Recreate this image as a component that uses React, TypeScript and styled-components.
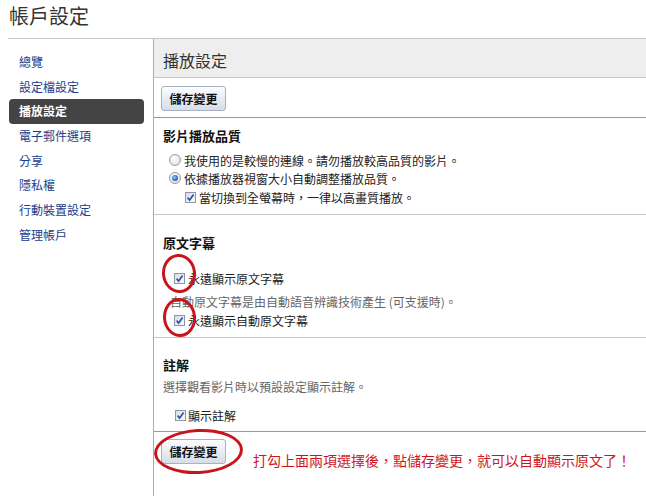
import React from "react";
import styled, { createGlobalStyle } from "styled-components";

const Global = createGlobalStyle`
  html, body { margin: 0; padding: 0; background: #fff; }
  body {
    font-family: "Noto Sans CJK TC", "Noto Sans", sans-serif;
    color: #222;
    width: 646px;
    height: 496px;
    overflow: hidden;
  }
`;

const Page = styled.div`
  padding-left: 8px;
`;

const Title = styled.h1`
  margin: 0;
  height: 38px;
  box-sizing: border-box;
  padding: 3px 0 0 1px;
  font-size: 20px;
  font-weight: 400;
  line-height: 26px;
  color: #333;
`;

const Main = styled.div`
  display: flex;
  border-top: 1px solid #c8c8c8;
  min-height: 460px;
`;

const Nav = styled.ul`
  list-style: none;
  margin: 0;
  padding: 11px 0 0 0;
  width: 145px;
  flex: none;
`;

const NavItem = styled.li<{ $active?: boolean }>`
  height: 24.7px;
  line-height: 24.7px;
  font-size: 12px;
  box-sizing: border-box;
  ${(p) =>
    p.$active
      ? `
    margin-left: 1px;
    width: 135px;
    padding-left: 10px;
    background: #444;
    color: #fff;
    font-weight: 700;
    border-radius: 4px;
  `
      : `
    padding-left: 11px;
    color: #1a3d8a;
  `}
`;

const Panel = styled.div`
  flex: 1;
  border-left: 1px solid #aaa;
`;

const PanelHeader = styled.div`
  height: 39px;
  box-sizing: border-box;
  padding: 3px 0 0 9px;
  display: flex;
  align-items: center;
  background: #eee;
  border-bottom: 1px solid #c8c8c8;
  font-size: 16px;
  color: #333;
`;

const ButtonBar = styled.div`
  height: 40px;
  box-sizing: border-box;
  padding: 7px 0 0 7px;
  border-bottom: 1px solid #999;
`;

const SaveButton = styled.button`
  position: relative;
  width: 65px;
  height: 25px;
  padding: 0;
  border: 1px solid #a6b2c4;
  border-radius: 3px;
  background: linear-gradient(#fbfcfd, #e9edf2 50%, #d6dee8);
  font-family: "Noto Sans CJK TC", sans-serif;
  font-size: 12px;
  font-weight: 700;
  color: #111;
  line-height: 23px;
`;

const Section = styled.div<{ $top: number; $bottom: number; $dark?: boolean }>`
  padding: ${(p) => p.$top}px 0 ${(p) => p.$bottom}px 9px;
  border-bottom: 1px solid ${(p) => (p.$dark ? "#999" : "#c8c8c8")};
`;

const Heading = styled.div`
  font-size: 13px;
  font-weight: 700;
  line-height: 18px;
  color: #111;
`;

const Row = styled.div<{ $indent: number; $gap?: number; $mt?: number }>`
  display: flex;
  align-items: center;
  height: 18px;
  padding-left: ${(p) => p.$indent}px;
  margin-top: ${(p) => p.$mt ?? 0}px;
  gap: ${(p) => p.$gap ?? 3}px;
  font-size: 12px;
  color: #222;
  white-space: nowrap;
`;

const Note = styled.div<{ $indent: number; $mt?: number }>`
  height: 18px;
  line-height: 18px;
  padding-left: ${(p) => p.$indent}px;
  margin-top: ${(p) => p.$mt ?? 0}px;
  font-size: 12px;
  color: #666;
  white-space: nowrap;
`;

const Radio = styled.span<{ $on?: boolean }>`
  position: relative;
  flex: none;
  width: 12px;
  height: 12px;
  box-sizing: border-box;
  border-radius: 50%;
  border: 1px solid #9a9a9a;
  background: radial-gradient(circle at 40% 35%, #fff, #dadada);
  &::after {
    content: "";
    display: ${(p) => (p.$on ? "block" : "none")};
    position: absolute;
    left: 2px;
    top: 2px;
    width: 6px;
    height: 6px;
    border-radius: 50%;
    background: radial-gradient(circle at 40% 40%, #9cc8f2, #2a68c0 60%, #153f86);
  }
`;

const Box = styled.span`
  position: relative;
  flex: none;
  width: 11px;
  height: 11px;
  box-sizing: border-box;
  border: 1px solid #8d96a6;
  background: linear-gradient(135deg, #d8dde5, #fafbfc);
  display: flex;
  align-items: center;
  justify-content: center;
`;

const Ring = styled.span<{ $l: number; $t: number; $w: number; $h: number; $r?: number }>`
  position: absolute;
  left: ${(p) => p.$l}px;
  top: ${(p) => p.$t}px;
  width: ${(p) => p.$w}px;
  height: ${(p) => p.$h}px;
  box-sizing: border-box;
  border: 3px solid #c8141c;
  border-radius: 50%;
  transform: rotate(${(p) => p.$r ?? 0}deg);
  pointer-events: none;
`;

const Footer = styled.div`
  display: flex;
  padding: 7px 0 0 7px;
`;

const Hint = styled.span`
  margin: 12px 0 0 27px;
  font-size: 14px;
  line-height: 18px;
  color: #d0141c;
  white-space: nowrap;
`;

const Check = ({ children }: { children?: React.ReactNode }) => (
  <Box>
    <svg width="9" height="9" viewBox="0 0 9 9">
      <path d="M1.6 4.6 L3.6 7 L7.6 1.4" fill="none" stroke="#2c56b4" strokeWidth="1.7" />
    </svg>
    {children}
  </Box>
);

const navItems = ["總覽", "設定檔設定", "播放設定", "電子郵件選項", "分享", "隱私權", "行動裝置設定", "管理帳戶"];

export default function App() {
  return (
    <Page>
      <Global />
      <Title>帳戶設定</Title>
      <Main>
        <Nav>
          {navItems.map((t) => (
            <NavItem key={t} $active={t === "播放設定"}>
              {t}
            </NavItem>
          ))}
        </Nav>
        <Panel>
          <PanelHeader>播放設定</PanelHeader>
          <ButtonBar>
            <SaveButton>儲存變更</SaveButton>
          </ButtonBar>

          <Section $top={9} $bottom={8}>
            <Heading>影片播放品質</Heading>
            <Row $indent={6} $mt={6}>
              <Radio />
              我使用的是較慢的連線。請勿播放較高品質的影片。
            </Row>
            <Row $indent={6}>
              <Radio $on />
              依據播放器視窗大小自動調整播放品質。
            </Row>
            <Row $indent={22} $mt={1}>
              <Check />
              當切換到全螢幕時，一律以高畫質播放。
            </Row>
          </Section>

          <Section $top={19} $bottom={8}>
            <Heading>原文字幕</Heading>
            <Row $indent={11} $mt={17}>
              <Check>
                <Ring $l={-13} $t={-20} $w={34} $h={39} $r={-5} />
              </Check>
              永遠顯示原文字幕
            </Row>
            <Note $indent={7} $mt={6}>
              自動原文字幕是由自動語音辨識技術產生 (可支援時)。
            </Note>
            <Row $indent={11}>
              <Check>
                <Ring $l={-12} $t={-18} $w={33} $h={39} $r={-5} />
              </Check>
              永遠顯示自動原文字幕
            </Row>
          </Section>

          <Section $top={18} $bottom={7} $dark>
            <Heading>註解</Heading>
            <Note $indent={0} $mt={4}>
              選擇觀看影片時以預設設定顯示註解。
            </Note>
            <Row $indent={12} $gap={2} $mt={10}>
              <Check />
              顯示註解
            </Row>
          </Section>

          <Footer>
            <SaveButton>
              儲存變更
              <Ring $l={-8} $t={-11} $w={89} $h={45} $r={-3} />
            </SaveButton>
            <Hint>打勾上面兩項選擇後，點儲存變更，就可以自動顯示原文了！</Hint>
          </Footer>
        </Panel>
      </Main>
    </Page>
  );
}
